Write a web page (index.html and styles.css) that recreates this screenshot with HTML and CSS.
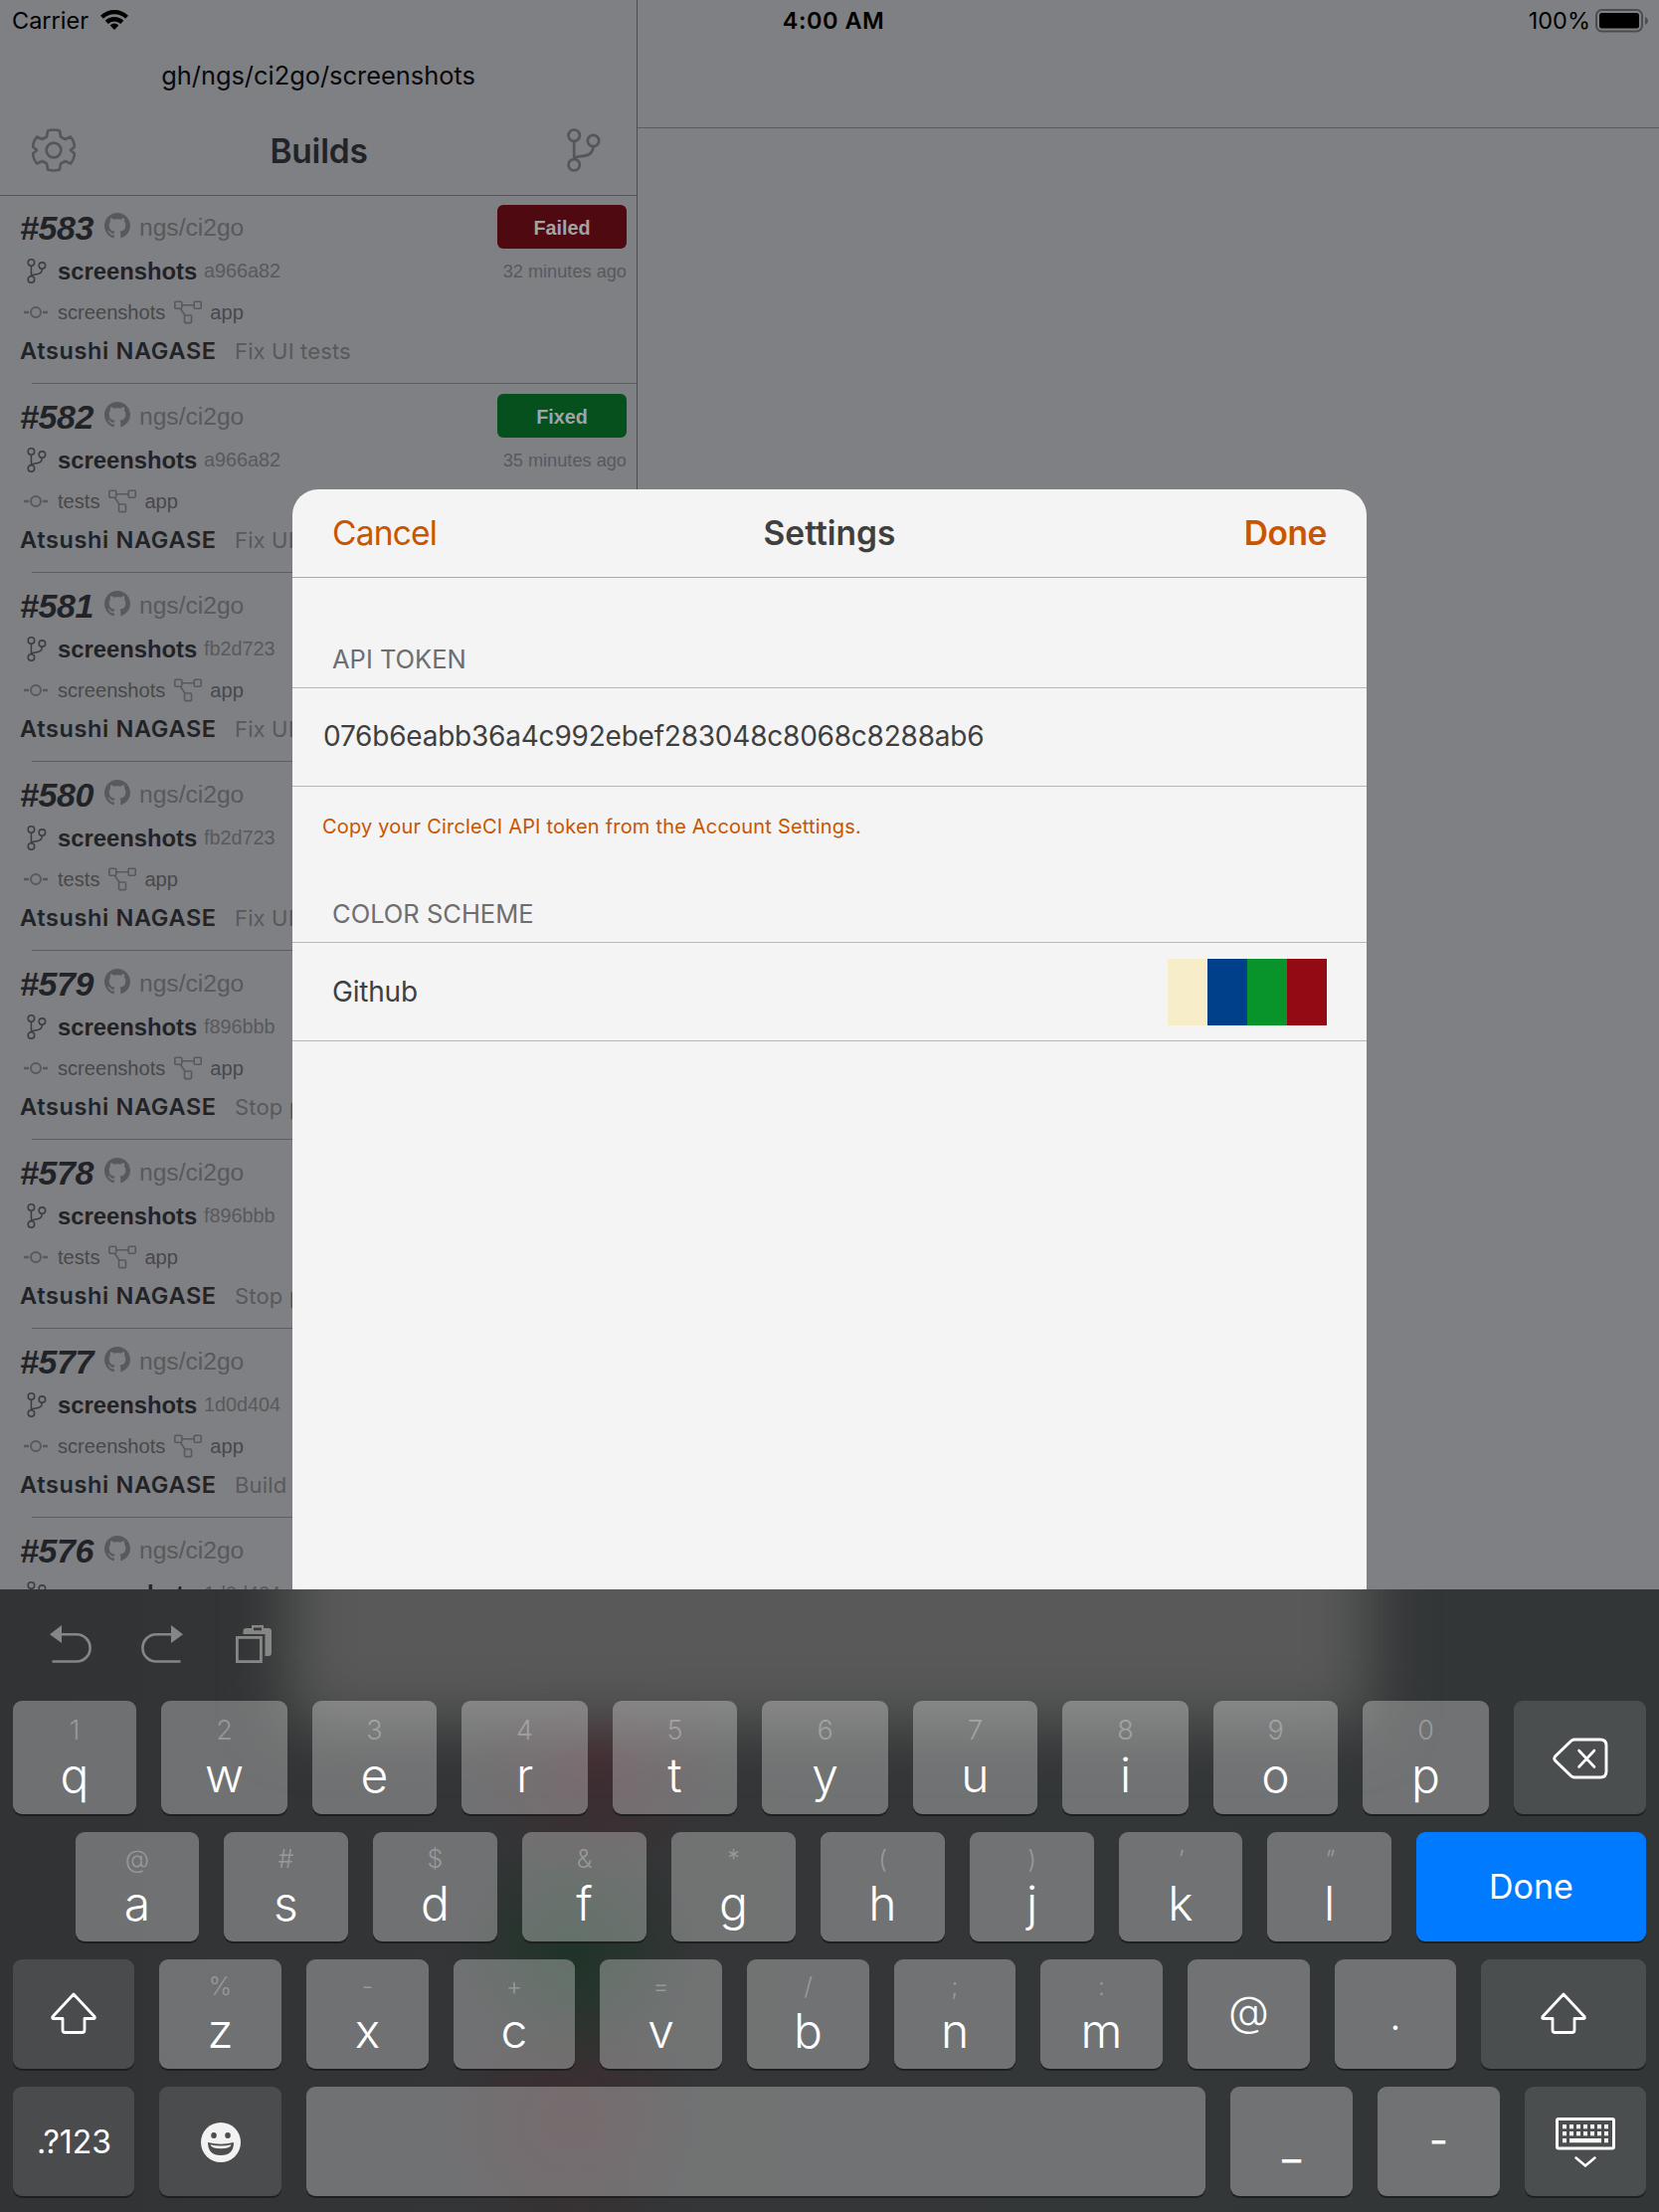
FILE: index.html
```html
<!DOCTYPE html>
<html lang="en">
<head>
<meta charset="utf-8">
<title>CI2Go</title>
<link rel="stylesheet" href="styles.css">
</head>
<body>
<svg class="defs" aria-hidden="true">
  <symbol id="i-github" viewBox="0 0 16 16"><path fill="currentColor" d="M8 0C3.58 0 0 3.58 0 8c0 3.54 2.29 6.53 5.47 7.59.4.07.55-.17.55-.38 0-.19-.01-.82-.01-1.49-2.01.37-2.53-.49-2.69-.94-.09-.23-.48-.94-.82-1.13-.28-.15-.68-.52-.01-.53.63-.01 1.08.58 1.23.82.72 1.21 1.87.87 2.33.66.07-.52.28-.87.51-1.07-1.78-.2-3.64-.89-3.64-3.95 0-.87.31-1.59.82-2.15-.08-.2-.36-1.02.08-2.12 0 0 .67-.21 2.2.82.64-.18 1.32-.27 2-.27s1.36.09 2 .27c1.53-1.04 2.2-.82 2.2-.82.44 1.1.16 1.92.08 2.12.51.56.82 1.27.82 2.15 0 3.07-1.87 3.75-3.65 3.95.29.25.54.73.54 1.48 0 1.07-.01 1.93-.01 2.2 0 .21.15.46.55.38A8.01 8.01 0 0 0 16 8c0-4.42-3.58-8-8-8z"/></symbol>
  <symbol id="i-branch" viewBox="0 0 34 44"><g fill="none" stroke="currentColor" stroke-width="2.700"><circle cx="7.200" cy="7.200" r="5.700"/><circle cx="26.500" cy="12.500" r="5.700"/><circle cx="7.200" cy="36.800" r="5.700"/><path d="M7.200 13v18M7.200 31c1.500-6 18.500 1.500 19.300-12.800"/></g></symbol>
  <symbol id="i-commit" viewBox="0 0 24 14"><g fill="none" stroke="currentColor" stroke-width="2"><circle cx="12" cy="7" r="5"/><path d="M0 7h5M19 7h5" stroke-width="2.400"/></g></symbol>
  <symbol id="i-flow" viewBox="0 0 28 24"><g fill="none" stroke="currentColor" stroke-width="1.600"><rect x=".8" y="1.300" width="7" height="7" rx="1"/><rect x="20.200" y="1.300" width="7" height="7" rx="1"/><rect x="10.500" y="15" width="7" height="7.600" rx="1"/><path d="M8 4.800h12M6.500 8.500l4.800 7"/></g></symbol>
  <symbol id="i-shift" viewBox="0 0 46 42"><path d="M23 2L44 24.500q1 2-1 2H34V38q0 2.500-2.500 2.500h-17Q12 40.500 12 38V26.500H3q-2 0-1-2z" fill="none" stroke="#fff" stroke-width="2.800" stroke-linejoin="round"/></symbol>
</svg>

<div class="screen">
  <header class="status">
    <div class="status-left"><span>Carrier</span>
      <svg width="28" height="20" viewBox="0 0 28 20"><g fill="none" stroke="#000" stroke-width="4.300"><path d="M1.400 7.300a18 18 0 0 1 25.200 0"/><path d="M6.200 12.400a11.200 11.200 0 0 1 15.600 0"/></g><path d="M14 20l-4.300-4.600a6 6 0 0 1 8.600 0z"/></svg>
    </div>
    <div class="status-time">4:00 AM</div>
    <div class="status-right"><span>100%</span>
      <svg width="54" height="24" viewBox="0 0 54 24"><rect x="1" y="1" width="46" height="21.500" rx="5.500" fill="none" stroke="#4b4c4f" stroke-width="2"/><rect x="4" y="4" width="40" height="15.500" rx="2.500"/><path d="M50 8q3 1.500 3 4t-3 4z" fill="#4b4c4f"/></svg>
    </div>
  </header>

  <div class="split">
    <section class="master">
      <header class="master-head">
        <div class="prompt">gh/ngs/ci2go/screenshots</div>
        <div class="nav">
          <svg class="gear" viewBox="0 0 44 44"><g fill="none" stroke="currentColor" stroke-width="2.600" stroke-linejoin="round"><circle cx="22" cy="22" r="7.400"/><path d="M16 2.500q6-2 12 0l1 6 4.500 2.500 5.500-2.500q3.500 4 4 10l-4 3.500v0l4 3.500q-.5 6-4 10L33.500 33 29 35.500l-1 6q-6 2-12 0l-1-6L10.500 33 5 35.500q-3.500-4-4-10L5 22l-4-3.500q.5-6 4-10l5.500 2.500L15 8.500z"/></g></svg>
          <h1>Builds</h1>
          <svg class="branch-lg"><use href="#i-branch"/></svg>
        </div>
      </header>
      <div class="builds">
        <article class="build">
          <div class="l1"><b>#583</b><svg><use href="#i-github"/></svg><span>ngs/ci2go</span><em class="badge failed">Failed</em></div>
          <div class="l2"><svg><use href="#i-branch"/></svg><b>screenshots</b><span>a966a82</span><time>32 minutes ago</time></div>
          <div class="l3"><svg class="commit"><use href="#i-commit"/></svg><span>screenshots</span><svg class="flow"><use href="#i-flow"/></svg><span>app</span></div>
          <div class="l4"><b>Atsushi NAGASE</b><span>Fix UI tests</span></div>
        </article>
        <article class="build">
          <div class="l1"><b>#582</b><svg><use href="#i-github"/></svg><span>ngs/ci2go</span><em class="badge fixed">Fixed</em></div>
          <div class="l2"><svg><use href="#i-branch"/></svg><b>screenshots</b><span>a966a82</span><time>35 minutes ago</time></div>
          <div class="l3"><svg class="commit"><use href="#i-commit"/></svg><span>tests</span><svg class="flow"><use href="#i-flow"/></svg><span>app</span></div>
          <div class="l4"><b>Atsushi NAGASE</b><span>Fix UI</span></div>
        </article>
        <article class="build">
          <div class="l1"><b>#581</b><svg><use href="#i-github"/></svg><span>ngs/ci2go</span></div>
          <div class="l2"><svg><use href="#i-branch"/></svg><b>screenshots</b><span>fb2d723</span></div>
          <div class="l3"><svg class="commit"><use href="#i-commit"/></svg><span>screenshots</span><svg class="flow"><use href="#i-flow"/></svg><span>app</span></div>
          <div class="l4"><b>Atsushi NAGASE</b><span>Fix UI</span></div>
        </article>
        <article class="build">
          <div class="l1"><b>#580</b><svg><use href="#i-github"/></svg><span>ngs/ci2go</span></div>
          <div class="l2"><svg><use href="#i-branch"/></svg><b>screenshots</b><span>fb2d723</span></div>
          <div class="l3"><svg class="commit"><use href="#i-commit"/></svg><span>tests</span><svg class="flow"><use href="#i-flow"/></svg><span>app</span></div>
          <div class="l4"><b>Atsushi NAGASE</b><span>Fix UI</span></div>
        </article>
        <article class="build">
          <div class="l1"><b>#579</b><svg><use href="#i-github"/></svg><span>ngs/ci2go</span></div>
          <div class="l2"><svg><use href="#i-branch"/></svg><b>screenshots</b><span>f896bbb</span></div>
          <div class="l3"><svg class="commit"><use href="#i-commit"/></svg><span>screenshots</span><svg class="flow"><use href="#i-flow"/></svg><span>app</span></div>
          <div class="l4"><b>Atsushi NAGASE</b><span>Stop p</span></div>
        </article>
        <article class="build">
          <div class="l1"><b>#578</b><svg><use href="#i-github"/></svg><span>ngs/ci2go</span></div>
          <div class="l2"><svg><use href="#i-branch"/></svg><b>screenshots</b><span>f896bbb</span></div>
          <div class="l3"><svg class="commit"><use href="#i-commit"/></svg><span>tests</span><svg class="flow"><use href="#i-flow"/></svg><span>app</span></div>
          <div class="l4"><b>Atsushi NAGASE</b><span>Stop p</span></div>
        </article>
        <article class="build">
          <div class="l1"><b>#577</b><svg><use href="#i-github"/></svg><span>ngs/ci2go</span></div>
          <div class="l2"><svg><use href="#i-branch"/></svg><b>screenshots</b><span>1d0d404</span></div>
          <div class="l3"><svg class="commit"><use href="#i-commit"/></svg><span>screenshots</span><svg class="flow"><use href="#i-flow"/></svg><span>app</span></div>
          <div class="l4"><b>Atsushi NAGASE</b><span>Build</span></div>
        </article>
        <article class="build">
          <div class="l1"><b>#576</b><svg><use href="#i-github"/></svg><span>ngs/ci2go</span></div>
          <div class="l2"><svg><use href="#i-branch"/></svg><b>screenshots</b><span>1d0d404</span></div>
        </article>
      </div>
    </section>
    <section class="detail"><div class="detail-head"></div></section>
  </div>

  <section class="modal">
    <header class="modal-head"><span class="cancel">Cancel</span><h2>Settings</h2><span class="done">Done</span></header>
    <h3 class="first">API TOKEN</h3>
    <div class="cell token">076b6eabb36a4c992ebef283048c8068c8288ab6</div>
    <p class="hint">Copy your CircleCI API token from the Account Settings.</p>
    <h3>COLOR SCHEME</h3>
    <div class="cell scheme"><span>Github</span><div class="swatches"><i class="cream"></i><i class="blue"></i><i class="green"></i><i class="red"></i></div></div>
  </section>

  <section class="keyboard">
    <div class="glow"></div>
    <div class="toolbar">
      <svg width="42" height="38" viewBox="0 0 42 38"><path d="M12 0v18L0 9.200z" fill="#868686"/><path d="M11 9.300h16a13.600 13.600 0 0 1 0 27.200H2.500" fill="none" stroke="#868686" stroke-width="2.600"/></svg>
      <svg width="42" height="38" viewBox="0 0 42 38"><path d="M30 0v18l12-8.800z" fill="#868686"/><path d="M31 9.300H15a13.600 13.600 0 0 0 0 27.200h24.500" fill="none" stroke="#868686" stroke-width="2.600"/></svg>
      <svg width="36" height="38" viewBox="0 0 36 38"><path fill="#868686" fill-rule="evenodd" d="M7.500 9V6q0-3 3-3H16V0h12v3h5q3 0 3 3v22q0 3-3 3h-3.500V9zM18 2.500v2.800h8V2.500z"/><rect x="1.400" y="12.400" width="24" height="24.200" fill="none" stroke="#868686" stroke-width="2.800"/></svg>
    </div>
    <div class="row r1">
      <kbd><small>1</small>q</kbd><kbd><small>2</small>w</kbd><kbd><small>3</small>e</kbd><kbd><small>4</small>r</kbd><kbd><small>5</small>t</kbd><kbd><small>6</small>y</kbd><kbd><small>7</small>u</kbd><kbd><small>8</small>i</kbd><kbd><small>9</small>o</kbd><kbd><small>0</small>p</kbd>
      <kbd class="dark del"><svg width="56" height="42" viewBox="0 0 56 42"><path d="M22 2h26q6 0 6 6v26q0 6-6 6H22q-2 0-3.500-1.500L2.500 23q-1.500-2 0-4l16-15.500Q20 2 22 2z" fill="none" stroke="#fff" stroke-width="2.900"/><path d="M26.500 13l15.500 16.500M42 13L26.500 29.500" stroke="#fff" stroke-width="2.600" stroke-linecap="round"/></svg></kbd>
    </div>
    <div class="row r2">
      <kbd><small>@</small>a</kbd><kbd><small>#</small>s</kbd><kbd><small>$</small>d</kbd><kbd><small>&amp;</small>f</kbd><kbd><small>*</small>g</kbd><kbd><small>(</small>h</kbd><kbd><small>)</small>j</kbd><kbd><small class="slant">'</small>k</kbd><kbd><small class="slant">"</small>l</kbd>
      <kbd class="primary">Done</kbd>
    </div>
    <div class="row r3">
      <kbd class="dark shift"><svg width="46" height="42"><use href="#i-shift"/></svg></kbd>
      <kbd><small>%</small>z</kbd><kbd><small>-</small>x</kbd><kbd><small>+</small>c</kbd><kbd><small>=</small>v</kbd><kbd><small>/</small>b</kbd><kbd><small>;</small>n</kbd><kbd><small>:</small>m</kbd>
      <kbd class="solo at">@</kbd><kbd class="solo dot">.</kbd>
      <kbd class="dark shift"><svg width="46" height="42"><use href="#i-shift"/></svg></kbd>
    </div>
    <div class="row r4">
      <kbd class="dark num">.?123</kbd>
      <kbd class="dark emoji"><svg width="40" height="40" viewBox="0 0 40 40"><circle cx="20" cy="20" r="20" fill="#f2f2f2"/><g fill="#4c4d4e"><ellipse cx="13" cy="13" rx="2.800" ry="3"/><ellipse cx="27" cy="13" rx="2.800" ry="3"/><path d="M7 20q13 3.500 26 0 0 13-13 13T7 20z"/></g><path d="M9.500 22.300q10.500 2.400 21 0-.8 4-10.500 4T9.500 22.300z" fill="#f2f2f2"/></svg></kbd>
      <kbd></kbd>
      <kbd class="solo under">_</kbd><kbd class="solo dash">-</kbd>
      <kbd class="dark emoji"><svg width="60" height="50" viewBox="0 0 60 50"><rect x="1.500" y="1.500" width="57" height="29.500" rx="1.500" fill="none" stroke="#fff" stroke-width="3"/><path d="M7 9.200h46M7 16.200h46" stroke="#fff" stroke-width="4.200" stroke-dasharray="4 3"/><path d="M7 23.200h4M14 23.200h32M49 23.200h4" stroke="#fff" stroke-width="4.200"/><path d="M20.500 40.500l9.500 8 9.500-8" fill="none" stroke="#fff" stroke-width="2.500" stroke-linecap="round"/></svg></kbd>
    </div>
  </section>
</div>
</body>
</html>
```

FILE: styles.css
```css
* { box-sizing: border-box; }
body { margin: 0; background: #7f8083; font-family: Inter, sans-serif; }
svg { display: block; flex: none; }
h1, h2, h3, p { margin: 0; }
.defs { position: absolute; width: 0; height: 0; }

.screen { position: relative; width: 1668px; height: 2224px; overflow: hidden; background: #7f8083; }

/* Status bar, drawn over both panes */
.status {
  position: absolute; inset: 0 0 auto 0; height: 42px; padding: 0 10px 0 12px;
  display: grid; grid-template-columns: 1fr auto 1fr; align-items: center;
  font-size: 23.500px; line-height: 42px; color: #000;
}
.status-left, .status-right { display: flex; align-items: center; }
.status-left { gap: 12px; }
.status-left svg { margin-bottom: 2px; }
.status-right { justify-content: flex-end; gap: 5px; }
.status-right svg { margin-bottom: 1px; }
.status-time { font-weight: 600; padding-left: 6px; letter-spacing: .5px; }

/* Split view */
.split { display: grid; grid-template-columns: 641px 1fr; height: 100%; }
.master { border-right: 1px solid #4c4d50; }
.detail-head { height: 129px; border-bottom: 1px solid #5a5b5e; }
.master-head { height: 197px; padding-top: 50px; border-bottom: 1px solid #555659; }
.prompt { height: 50px; line-height: 51px; font-size: 25.400px; text-align: center; color: #08090c; }
.nav { height: 96px; padding: 6px 36px 0 32px; display: flex; align-items: center; justify-content: space-between; color: #555659; }
.nav h1 { font-size: 33.500px; font-weight: 600; line-height: 44px; letter-spacing: -.2px; padding: 2px 5px 0 0; color: #222327; }
.gear { width: 44px; height: 44px; }
.branch-lg { width: 34px; height: 44px; }

.builds { margin-top: -1px; font-family: "Liberation Sans", Arial, sans-serif; color: #58595c; }
.build { position: relative; height: 190px; padding: 10px 10px 0 20px; overflow: hidden; }
.build::after { content: ""; position: absolute; left: 32px; right: 0; bottom: 0; height: 1px; background: #5c5d60; }
.build > div { display: flex; align-items: center; height: 30px; white-space: nowrap; }
.build b { color: #222327; }
.build .l1 { height: 44px; font-size: 24.600px; }
.l1 b { font-size: 34px; font-style: italic; width: 85px; letter-spacing: -.4px; padding-top: 2px; }
.l1 svg { width: 26px; height: 26px; margin: 0 9px 2px 0; }
.l1 span { padding-top: 2px; }
.badge { width: 130px; height: 44px; margin-left: auto; border-radius: 6px; font: bold 19.800px/46px "Liberation Sans", Arial, sans-serif; text-align: center; color: #a3a3a6; }
.failed { background: #4e0911; }
.fixed { background: #05501c; }
.l2 { margin-top: 7px; font-size: 19.800px; }
.l2 svg { width: 20px; height: 25px; margin: 0 11px 0 7px; color: #3c3d40; }
.l2 b { font-size: 23.800px; width: 147px; padding-top: 1px; }
.l2 span { padding-top: 1px; }
.l2 time { margin-left: auto; font-size: 18.200px; padding-top: 2px; }
.l3 { margin-top: 12px; font-size: 20.100px; color: #47484b; }
.l3 .commit { width: 24px; height: 14px; margin: 0 10px 0 4px; color: #58595c; }
.l3 .flow { width: 28px; height: 24px; margin: 0 8px 0 9px; color: #58595c; }
.l4 { margin-top: 8px; font: 22px/30px Inter, sans-serif; }
.l4 b { font-size: 23.500px; font-weight: 600; width: 216px; letter-spacing: .65px; padding-top: 1px; }
.l4 span { letter-spacing: .15px; padding-top: 1px; }

/* Settings sheet */
.modal { position: absolute; left: 294px; top: 492px; width: 1080px; height: 1200px; border-radius: 26px; background: #f4f4f4; color: #3f3f3f; }
.modal-head { height: 89px; padding: 0 40px; display: grid; grid-template-columns: 1fr auto 1fr; align-items: center; border-bottom: 1px solid #a8a8aa; font-size: 33.500px; line-height: 88px; }
.modal-head h2 { font-size: 33.500px; font-weight: 600; }
.cancel, .done { color: #c95500; }
.cancel { letter-spacing: -.8px; }
.done { font-weight: 600; text-align: right; letter-spacing: -.4px; }
.modal h3 { height: 57px; padding-left: 40px; font-size: 25.500px; font-weight: 400; line-height: 57px; color: #6d6d72; }
.modal h3.first { margin-top: 53px; }
.cell { height: 100px; border: solid #b9b9bb; border-width: 1px 0; line-height: 97px; font-size: 28px; }
.token { padding-left: 31px; letter-spacing: -.22px; }
.hint { height: 99px; padding: 0 30px; line-height: 81px; font-size: 20px; color: #c95500; letter-spacing: .2px; }
.scheme { display: flex; justify-content: space-between; align-items: center; padding: 0 40px; letter-spacing: -.2px; }
.swatches { display: flex; }
.swatches i { width: 40px; height: 67px; }
.cream { background: #f7eec9; }
.blue { background: #003f8a; }
.green { background: #08942a; }
.red { background: #940a14; }

/* Keyboard */
.keyboard {
  position: absolute; left: 0; top: 1598px; width: 1668px; height: 626px; overflow: hidden; padding: 112px 13px 0;
  background:
    radial-gradient(circle at 600px 165px, rgba(85, 25, 38, .38), transparent 130px),
    radial-gradient(circle at 575px 365px, rgba(15, 50, 28, .55), transparent 125px),
    radial-gradient(circle at 575px 535px, rgba(75, 30, 38, .42), transparent 130px),
    linear-gradient(90deg, #323335, #343637 50%, #333637);
}
.glow { position: absolute; left: 290px; top: -170px; width: 1088px; height: 306px; background: #585958; filter: blur(31px); }
.toolbar { position: absolute; left: 50px; top: 36px; display: flex; gap: 50px; }
.toolbar svg:last-child { margin-left: 3px; }
.row { position: relative; display: grid; column-gap: 25px; height: 110px; margin-bottom: 18px; }
.r1 { height: 114px; grid-template-columns: 124px 127px 125px 127px 125px 127px 125px 127px 125px 127px 133px; }
.r2 { padding-left: 63px; grid-template-columns: 124px repeat(6, 125px) 124px 125px 231px; }
.r3 { grid-template-columns: 122px 123px 123px 122px 123px 123px 122px 123px 123px 122px 166px; }
.r4 { grid-template-columns: 122px 123px 904px 123px 123px 122px; }
kbd {
  display: flex; flex-direction: column; align-items: center; border-radius: 9px;
  background: rgba(255, 255, 255, .3); box-shadow: 0 2px 0 #1e1f20;
  font: 330 48px/56px Inter, sans-serif; color: #fff;
}
kbd small { font-size: 27px; line-height: 30px; height: 30px; margin: 15px 0 2px; color: rgba(255, 255, 255, .3); }
.r2 kbd small, .r3 kbd small { font-size: 25px; margin: 12px 0 2px; }
kbd small.slant { transform: skewX(-14deg); }
.dark { background: rgba(255, 255, 255, .12); justify-content: center; }
.primary { background: #007aff; font-size: 34px; font-weight: 400; justify-content: center; }
.num { font-size: 32px; font-weight: 400; padding: 2px 0 0 1px; }
.del, .emoji { padding-top: 2px; }
.shift { padding-bottom: 2px; }
.solo { justify-content: center; font-size: 42px; }
.at { padding-bottom: 7px; }
.dot { padding-top: 2px; }
.under, .dash { font-weight: 400; }
.under { padding-top: 6px; }
.dash { padding-bottom: 3px; }
```
